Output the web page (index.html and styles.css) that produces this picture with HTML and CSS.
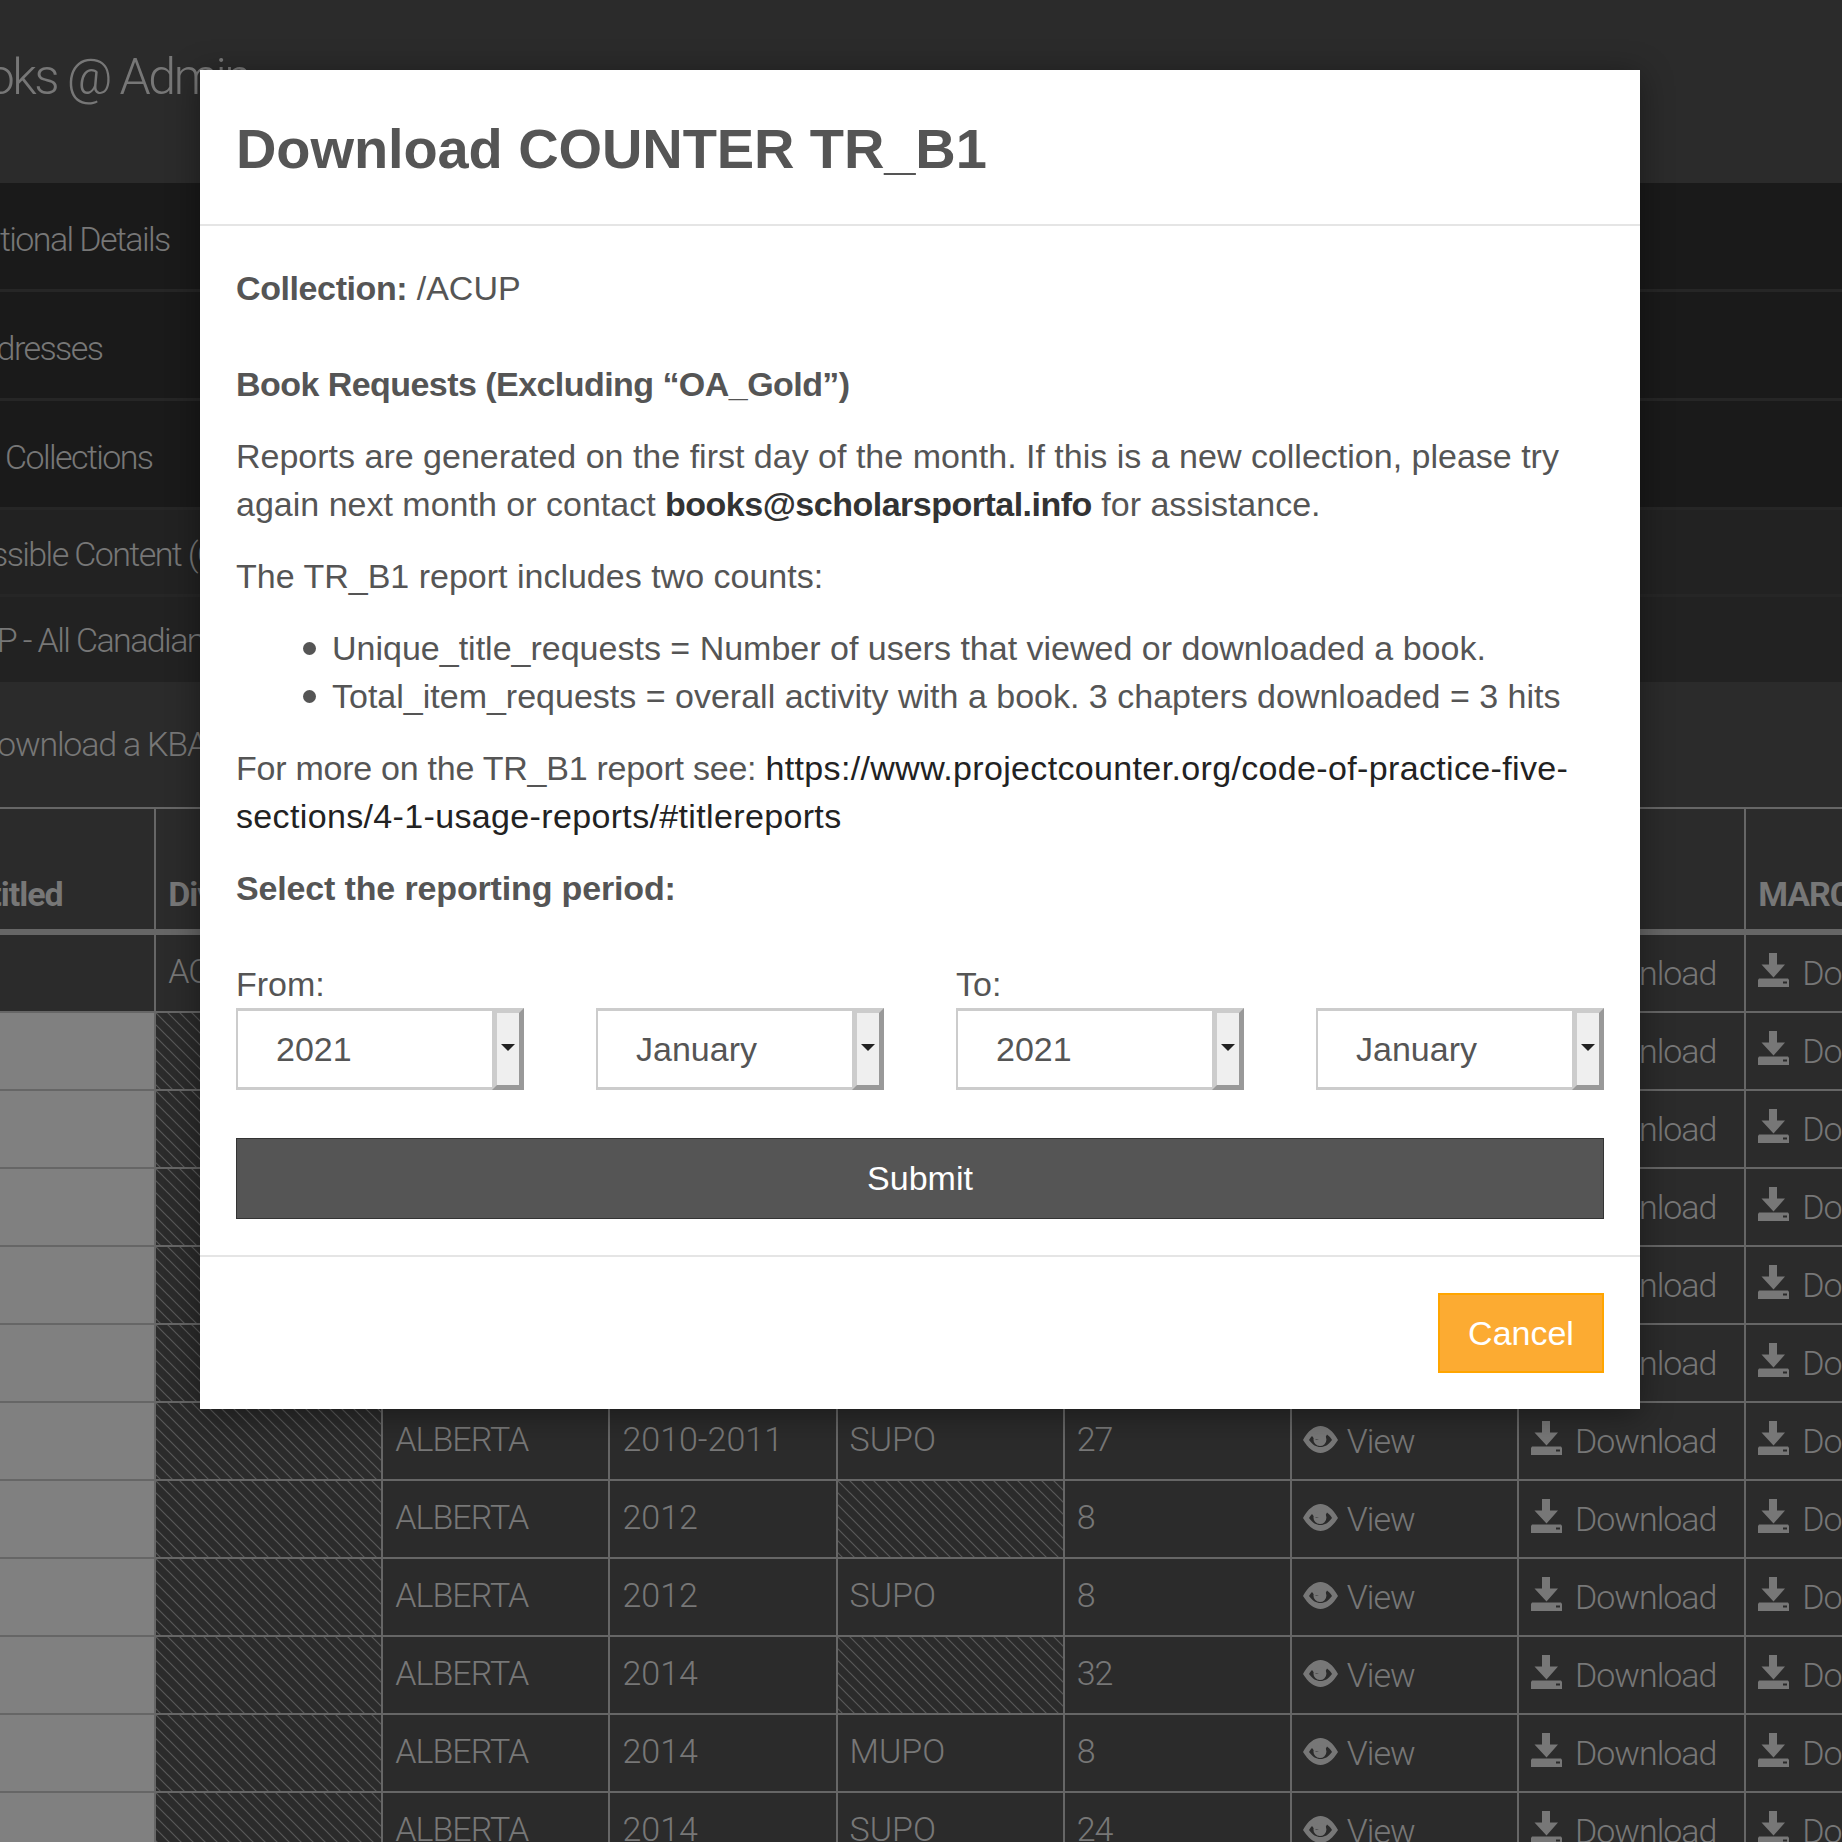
FILE: index.html
```html
<!DOCTYPE html>
<html lang="en">
<head>
    <meta charset="UTF-8">
    <title>Books @ Admin</title>
    <link rel="stylesheet" href="styles.css">
</head>
<body>

<svg class="icon-defs" aria-hidden="true">
    <symbol id="iconEye" viewBox="0 0 35 27">
        <path fill-rule="evenodd" d="M0 14C5 5 11 0 17.500 0S30 5 35 14C30 22 24 27 17.500 27S5 22 0 14ZM6 14C10 19 13 21 17.500 21S25 19 29 14C28 12 26 10 24 8.500A8.500 8.500 0 0 1 9 10C8 11 7 12.500 6 14Z"/>
        <path fill-rule="evenodd" d="M17 7A6.500 6.500 0 1 1 16.900 20A6.500 6.500 0 0 1 17 7ZM14 10A2 2 0 1 0 14.100 14A2 2 0 0 0 14 10Z"/>
    </symbol>
    <symbol id="iconDownload" viewBox="0 0 31 34">
        <path fill-rule="evenodd" d="M11 0H19V11.500H27L15.500 24.500L3.500 11.500H11ZM1 25.500H30L31 27V34H0V27ZM25 28.500V30.500H29V28.500Z"/>
    </symbol>
</svg>

<div id="page">
    <header class="site-header">
        <h1>Books @ Admin</h1>
    </header>

    <nav class="main-nav">
        <div class="nav-row">Institutional Details</div>
        <div class="nav-row">Email Addresses</div>
        <div class="nav-row">Licensed Collections</div>
        <div class="nav-row nav-row-sub">Inaccessible Content (OA)</div>
        <div class="nav-row nav-row-sub nav-row-indent">ACUP - All Canadian University Presses</div>
    </nav>

    <div class="download-row">Download a KBART file</div>

    <table class="holdings">
        <thead>
            <tr>
                <th>Entitled</th>
                <th>Division</th>
                <th>Publisher</th>
                <th>Year</th>
                <th>Package</th>
                <th>Titles</th>
                <th>List</th>
                <th>KBART</th>
                <th>MARC</th>
            </tr>
        </thead>
        <tbody>
            <tr>
                <td></td><td>ACUP</td><td>ALL</td><td></td><td></td><td>1200</td>
                <td><a class="view"><svg class="eye"><use href="#iconEye"/></svg>View</a></td>
                <td><a class="dl"><svg class="arrow"><use href="#iconDownload"/></svg>Download</a></td>
                <td><a class="dl"><svg class="arrow"><use href="#iconDownload"/></svg>Download</a></td>
            </tr>
            <tr>
                <td class="flag"></td><td class="hatch"></td><td>ACADIA</td><td>2010</td><td>SUPO</td><td>12</td>
                <td><a class="view"><svg class="eye"><use href="#iconEye"/></svg>View</a></td>
                <td><a class="dl"><svg class="arrow"><use href="#iconDownload"/></svg>Download</a></td>
                <td><a class="dl"><svg class="arrow"><use href="#iconDownload"/></svg>Download</a></td>
            </tr>
            <tr>
                <td class="flag"></td><td class="hatch"></td><td>ACADIA</td><td>2012</td><td>SUPO</td><td>9</td>
                <td><a class="view"><svg class="eye"><use href="#iconEye"/></svg>View</a></td>
                <td><a class="dl"><svg class="arrow"><use href="#iconDownload"/></svg>Download</a></td>
                <td><a class="dl"><svg class="arrow"><use href="#iconDownload"/></svg>Download</a></td>
            </tr>
            <tr>
                <td class="flag"></td><td class="hatch"></td><td>ACADIA</td><td>2014</td><td>MUPO</td><td>6</td>
                <td><a class="view"><svg class="eye"><use href="#iconEye"/></svg>View</a></td>
                <td><a class="dl"><svg class="arrow"><use href="#iconDownload"/></svg>Download</a></td>
                <td><a class="dl"><svg class="arrow"><use href="#iconDownload"/></svg>Download</a></td>
            </tr>
            <tr>
                <td class="flag"></td><td class="hatch"></td><td>ALBERTA</td><td>2008</td><td>SUPO</td><td>14</td>
                <td><a class="view"><svg class="eye"><use href="#iconEye"/></svg>View</a></td>
                <td><a class="dl"><svg class="arrow"><use href="#iconDownload"/></svg>Download</a></td>
                <td><a class="dl"><svg class="arrow"><use href="#iconDownload"/></svg>Download</a></td>
            </tr>
            <tr>
                <td class="flag"></td><td class="hatch"></td><td>ALBERTA</td><td>2009</td><td>SUPO</td><td>19</td>
                <td><a class="view"><svg class="eye"><use href="#iconEye"/></svg>View</a></td>
                <td><a class="dl"><svg class="arrow"><use href="#iconDownload"/></svg>Download</a></td>
                <td><a class="dl"><svg class="arrow"><use href="#iconDownload"/></svg>Download</a></td>
            </tr>
            <tr>
                <td class="flag"></td><td class="hatch"></td><td>ALBERTA</td><td>2010-2011</td><td>SUPO</td><td>27</td>
                <td><a class="view"><svg class="eye"><use href="#iconEye"/></svg>View</a></td>
                <td><a class="dl"><svg class="arrow"><use href="#iconDownload"/></svg>Download</a></td>
                <td><a class="dl"><svg class="arrow"><use href="#iconDownload"/></svg>Download</a></td>
            </tr>
            <tr>
                <td class="flag"></td><td class="hatch"></td><td>ALBERTA</td><td>2012</td><td class="hatch"></td><td>8</td>
                <td><a class="view"><svg class="eye"><use href="#iconEye"/></svg>View</a></td>
                <td><a class="dl"><svg class="arrow"><use href="#iconDownload"/></svg>Download</a></td>
                <td><a class="dl"><svg class="arrow"><use href="#iconDownload"/></svg>Download</a></td>
            </tr>
            <tr>
                <td class="flag"></td><td class="hatch"></td><td>ALBERTA</td><td>2012</td><td>SUPO</td><td>8</td>
                <td><a class="view"><svg class="eye"><use href="#iconEye"/></svg>View</a></td>
                <td><a class="dl"><svg class="arrow"><use href="#iconDownload"/></svg>Download</a></td>
                <td><a class="dl"><svg class="arrow"><use href="#iconDownload"/></svg>Download</a></td>
            </tr>
            <tr>
                <td class="flag"></td><td class="hatch"></td><td>ALBERTA</td><td>2014</td><td class="hatch"></td><td>32</td>
                <td><a class="view"><svg class="eye"><use href="#iconEye"/></svg>View</a></td>
                <td><a class="dl"><svg class="arrow"><use href="#iconDownload"/></svg>Download</a></td>
                <td><a class="dl"><svg class="arrow"><use href="#iconDownload"/></svg>Download</a></td>
            </tr>
            <tr>
                <td class="flag"></td><td class="hatch"></td><td>ALBERTA</td><td>2014</td><td>MUPO</td><td>8</td>
                <td><a class="view"><svg class="eye"><use href="#iconEye"/></svg>View</a></td>
                <td><a class="dl"><svg class="arrow"><use href="#iconDownload"/></svg>Download</a></td>
                <td><a class="dl"><svg class="arrow"><use href="#iconDownload"/></svg>Download</a></td>
            </tr>
            <tr>
                <td class="flag"></td><td class="hatch"></td><td>ALBERTA</td><td>2014</td><td>SUPO</td><td>24</td>
                <td><a class="view"><svg class="eye"><use href="#iconEye"/></svg>View</a></td>
                <td><a class="dl"><svg class="arrow"><use href="#iconDownload"/></svg>Download</a></td>
                <td><a class="dl"><svg class="arrow"><use href="#iconDownload"/></svg>Download</a></td>
            </tr>
        </tbody>
    </table>
</div>

<div id="reportModal">
    <div class="modal-header">
        <h2>Download COUNTER TR_B1</h2>
    </div>
    <form class="modal-body">
        <p class="collection"><strong>Collection:</strong> /ACUP</p>
        <p><strong>Book Requests (Excluding “OA_Gold”)</strong></p>
        <p>Reports are generated on the first day of the month. If this is a new collection, please try again next month or contact <a class="mail">books@scholarsportal.info</a> for assistance.</p>
        <p>The TR_B1 report includes two counts:</p>
        <ul>
            <li>Unique_title_requests = Number of users that viewed or downloaded a book.</li>
            <li>Total_item_requests = overall activity with a book. 3 chapters downloaded = 3 hits</li>
        </ul>
        <p class="more">For more on the TR_B1 report see: <a class="link">https://www.projectcounter.org/code-of-practice-five-sections/4-1-usage-reports/#titlereports</a></p>
        <p class="period"><strong>Select the reporting period:</strong></p>
        <div class="period-grid">
            <label class="period-label">From:</label>
            <label class="period-label">To:</label>
            <div class="select-box">
                <select><option>2021</option></select>
                <span class="select-arrow"></span>
            </div>
            <div class="select-box">
                <select><option>January</option></select>
                <span class="select-arrow"></span>
            </div>
            <div class="select-box">
                <select><option>2021</option></select>
                <span class="select-arrow"></span>
            </div>
            <div class="select-box">
                <select><option>January</option></select>
                <span class="select-arrow"></span>
            </div>
        </div>
        <button type="button" class="submit">Submit</button>
    </form>
    <div class="modal-footer">
        <button type="button" class="cancel">Cancel</button>
    </div>
</div>

</body>
</html>
```

FILE: styles.css
```css
html, body {
    margin: 0;
    padding: 0;
    height: 1842px;
    overflow: hidden;
    background-color: #2b2b2b;
    font-family: "Liberation Sans", Arial, sans-serif;
}
.icon-defs {
    display: none;
}
#page {
    margin-left: -150px;
    width: 2200px;
    color: #777;
    font-family: Roboto, "Liberation Sans", sans-serif;
    font-size: 34px;
    font-weight: 300;
    letter-spacing: -1px;
}
.site-header {
    height: 183px;
    box-sizing: border-box;
    padding: 46px 0 0 83px;
    background-color: #2b2b2b;
}
.site-header h1 {
    margin: 0;
    font-size: 50px;
    line-height: 62px;
    font-weight: 300;
    letter-spacing: -2.5px;
}
.main-nav {
    background-color: #1a1a1a;
}
.nav-row {
    box-sizing: border-box;
    height: 109px;
    padding: 32px 0 0 28px;
    line-height: 48px;
    letter-spacing: -1.6px;
    border-bottom: 3px solid #262626;
}
.nav-row:first-child {
    padding-left: 68px;
}
.nav-row-sub {
    height: 87px;
    padding-top: 20px;
    padding-left: 52px;
    background-color: #222;
}
.nav-row-indent {
    height: 85px;
    padding-top: 19px;
    padding-left: 86px;
    border-bottom: none;
}
.download-row {
    height: 125px;
    box-sizing: border-box;
    padding: 38px 0 0 126px;
    line-height: 48px;
    letter-spacing: -1.2px;
}
.holdings {
    border-collapse: collapse;
    table-layout: fixed;
    width: 2044px;
    margin-left: 77px;
    border-top: 2px solid #666;
}
.holdings th, .holdings td {
    width: 227.150px;
    box-sizing: border-box;
    padding: 0 12px;
    border: 2px solid #666;
    border-top: none;
    text-align: left;
    white-space: nowrap;
    overflow: hidden;
}
.holdings th {
    height: 124px;
    padding-top: 49px;
    border-bottom-width: 6px;
    font-weight: 700;
}
.holdings th:first-child {
    padding-left: 25px;
}
.holdings td {
    height: 78px;
    padding-bottom: 4px;
}
.holdings tbody tr:first-child td {
    height: 80px;
}
.holdings td:nth-child(4), .holdings td:nth-child(5) {
    letter-spacing: 0;
}
.flag {
    background-color: #808080;
}
.hatch {
    background-color: #2b2b2b;
    background-image: url("data:image/svg+xml,%3Csvg xmlns='http://www.w3.org/2000/svg' width='12' height='12'%3E%3Cpath d='M-3 -3L15 15M-3 9L3 15M9 -3L15 3' stroke='%23585858' stroke-width='1.200'/%3E%3C/svg%3E");
}
.view, .dl {
    display: flex;
    align-items: center;
    gap: 9px;
    margin-top: 4px;
}
.dl {
    gap: 13px;
}
.eye {
    width: 35px;
    height: 27px;
    margin: 0 0 4px -1px;
    fill: #777;
}
.arrow {
    width: 31px;
    height: 34px;
    margin-bottom: 6px;
    fill: #777;
}
#reportModal {
    position: absolute;
    top: 70px;
    left: 200px;
    width: 1440px;
    background-color: #fff;
    box-shadow: 0 5px 30px rgba(0, 0, 0, 0.4);
    color: #555;
    font-size: 34px;
    line-height: 48px;
}
.modal-header {
    box-sizing: border-box;
    height: 156px;
    padding: 4px 36px 0;
    display: flex;
    align-items: center;
    border-bottom: 2px solid #e5e5e5;
}
.modal-header h2 {
    margin: 0;
    font-size: 56px;
    line-height: 64px;
    font-weight: 700;
    letter-spacing: -0.1px;
}
.modal-body {
    display: block;
    padding: 38px 36px 36px;
}
.modal-body p {
    margin: 0 0 24px;
}
.modal-body strong {
    letter-spacing: -0.55px;
}
.modal-body .collection {
    margin-bottom: 48px;
}
.modal-body .collection strong {
    letter-spacing: -0.4px;
}
.modal-body .more {
    letter-spacing: -0.25px;
}
.modal-body .period {
    margin-bottom: 48px;
}
.modal-body .period strong {
    letter-spacing: -0.15px;
}
.mail {
    color: #333;
    font-weight: 700;
    letter-spacing: -0.5px;
}
.link {
    color: #222;
    letter-spacing: 0.35px;
}
.modal-body ul {
    margin: 0 0 24px;
    padding-left: 96px;
    list-style: none;
}
.modal-body li {
    position: relative;
}
/* round bullet, the marker glyph is too small at this size */
.modal-body li::before {
    content: "";
    position: absolute;
    top: 18px;
    left: -29px;
    width: 13px;
    height: 13px;
    border-radius: 50%;
    background-color: #555;
}
.period-grid {
    display: grid;
    grid-template-columns: repeat(4, 1fr);
    column-gap: 72px;
    margin-bottom: 48px;
}
.period-label {
    grid-column: span 2;
}
.select-box {
    display: flex;
    box-sizing: border-box;
    height: 82px;
    border: 3px solid #ccc;
    border-left-width: 2px;
    border-right: none;
    background-color: #fff;
}
.select-box select {
    flex: 1;
    min-width: 0;
    border: none;
    padding: 0 0 0 38px;
    background: transparent;
    color: #555;
    font-family: "Liberation Sans", Arial, sans-serif;
    font-size: 34px;
    appearance: none;
    outline: none;
}
.select-arrow {
    width: 32px;
    position: relative;
    box-sizing: border-box;
    margin: -3px 0 -3px;
    border-style: solid;
    border-width: 5px;
    border-color: #ccc #999 #999 #ccc;
    background-color: #efefef;
}
.select-arrow::after {
    content: "";
    position: absolute;
    top: 31px;
    left: 4px;
    border-style: solid;
    border-width: 7px 7px 0;
    border-color: #222 transparent transparent;
}
.submit {
    display: block;
    box-sizing: border-box;
    width: 100%;
    height: 81px;
    border: 1px solid #333;
    background-color: #555;
    color: #fff;
    font-family: "Liberation Sans", Arial, sans-serif;
    font-size: 34px;
}
.modal-footer {
    display: flex;
    justify-content: flex-end;
    padding: 36px;
    border-top: 2px solid #e5e5e5;
}
.cancel {
    box-sizing: border-box;
    width: 166px;
    height: 80px;
    border: 2px solid #ffa500;
    background-color: #fcab32;
    color: #fff;
    font-family: "Liberation Sans", Arial, sans-serif;
    font-size: 34px;
}
```
